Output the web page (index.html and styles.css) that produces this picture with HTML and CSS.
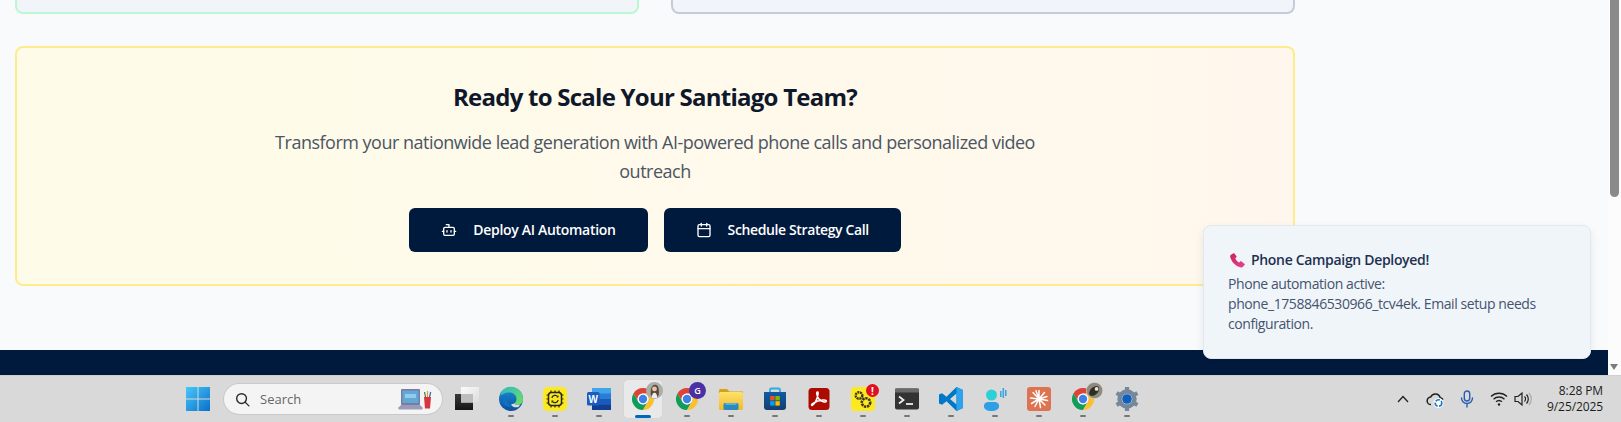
FILE: index.html
```html
<!DOCTYPE html>
<html lang="en">
<head>
<meta charset="utf-8">
<title>Ready to Scale Your Santiago Team?</title>
<link rel="stylesheet" href="styles.css">
</head>
<body>
<svg class="defs" aria-hidden="true">
  <symbol id="chrome" viewBox="0 0 24 24">
    <path fill="#db4437" d="M12 1A11 11 0 0 1 21.53 6.5H12A5.5 5.5 0 0 0 7.24 14.75L2.47 6.5A11 11 0 0 1 12 1z"/>
    <path fill="#0f9d58" d="M2.47 6.5L7.24 14.75A5.5 5.5 0 0 0 16.76 14.75L12 23A11 11 0 0 1 2.47 6.5z"/>
    <path fill="#fbc02d" d="M21.53 6.5H12A5.5 5.5 0 0 1 16.76 14.75L12 23A11 11 0 0 0 21.53 6.5z"/>
    <circle cx="12" cy="12" r="5.4" fill="#fff"/>
    <circle cx="12" cy="12" r="4.2" fill="#3f7fe8"/>
  </symbol>
  <linearGradient id="edgeA" x1="0" y1="0" x2="1" y2="1"><stop offset="0" stop-color="#2fb8c8"/><stop offset="1" stop-color="#72e05a"/></linearGradient>
  <linearGradient id="edgeB" x1="0" y1="0" x2="0" y2="1"><stop offset="0" stop-color="#1a8fd6"/><stop offset="1" stop-color="#0b4f9e"/></linearGradient>
  <linearGradient id="winG" x1="0" y1="0" x2="1" y2="1"><stop offset="0" stop-color="#47c8fb"/><stop offset="1" stop-color="#0a6fc8"/></linearGradient>
  <linearGradient id="folderG" x1="0" y1="0" x2="0" y2="1"><stop offset="0" stop-color="#fde26b"/><stop offset="1" stop-color="#f3b92a"/></linearGradient>
  <linearGradient id="storeG" x1="0" y1="0" x2="0" y2="1"><stop offset="0" stop-color="#0f5ca6"/><stop offset="1" stop-color="#163d6e"/></linearGradient>
  <linearGradient id="callG" x1="0" y1="0" x2="1" y2="1"><stop offset="0" stop-color="#c8264f"/><stop offset="1" stop-color="#ee3f9c"/></linearGradient>
  <linearGradient id="tvA" x1="0" y1="0" x2="1" y2="1"><stop offset="0" stop-color="#fbfbfb"/><stop offset="1" stop-color="#dcdcdc"/></linearGradient>
  <linearGradient id="tvB" x1="0" y1="0" x2="0" y2="1"><stop offset="0" stop-color="#3a3a3a"/><stop offset="1" stop-color="#141414"/></linearGradient>
</svg>

<div class="screen">
  <div class="viewport">
    <div class="page">
      <main class="content">
        <div class="card-row">
          <div class="stub stub-green"></div>
          <div class="stub stub-slate"></div>
        </div>
        <section class="cta">
          <h2 class="cta-title">Ready to Scale Your Santiago Team?</h2>
          <p class="cta-text">Transform your nationwide lead generation with AI-powered phone calls and personalized video outreach</p>
          <div class="cta-actions">
            <button class="btn btn-wide">
              <svg class="btn-icon" viewBox="0 0 24 24" fill="none" stroke="currentColor" stroke-width="2" stroke-linecap="round" stroke-linejoin="round"><path d="M12 8V4H8"/><rect x="4" y="8" width="16" height="12" rx="2"/><path d="M2 14h2"/><path d="M20 14h2"/><path d="M15 13v2"/><path d="M9 13v2"/></svg>
              <span>Deploy AI Automation</span>
            </button>
            <button class="btn">
              <svg class="btn-icon" viewBox="0 0 24 24" fill="none" stroke="currentColor" stroke-width="2" stroke-linecap="round" stroke-linejoin="round"><path d="M8 2v4"/><path d="M16 2v4"/><rect x="3" y="4" width="18" height="18" rx="2"/><path d="M3 10h18"/></svg>
              <span>Schedule Strategy Call</span>
            </button>
          </div>
        </section>
      </main>
      <footer class="footer"></footer>
    </div>
    <div class="scrollbar">
      <div class="thumb"></div>
      <div class="arrow-down"></div>
    </div>
  </div>

  <nav class="taskbar">
    <div class="tb-item tb-start">
      <svg class="tb-icon" viewBox="0 0 24 24"><path fill="url(#winG)" d="M0 0h11.500v11.500H0zM12.500 0H24v11.500H12.500zM0 12.500h11.500V24H0zM12.500 12.500H24V24H12.500z"/></svg>
    </div>
    <div class="search">
      <svg class="search-icon" viewBox="0 0 16 16" fill="none" stroke="#2b2b2b" stroke-width="1.500" stroke-linecap="round"><circle cx="7" cy="7" r="5.200"/><path d="M10.800 10.800l4 4"/></svg>
      <span class="search-text">Search</span>
      <svg class="search-art" viewBox="0 0 34 22" fill="none">
        <path fill="#9a9bb8" d="M0 20l3-3h19l3 3-1 1.500H1z"/>
        <rect x="3" y="1" width="19" height="16" rx="1" fill="#7a7b9e"/>
        <rect x="4.500" y="2.500" width="16" height="12.500" fill="#5fa8d8"/>
        <rect x="7" y="6" width="11" height="4" fill="#93cbea"/>
        <path fill="#d8353e" d="M26 9h7l-1 11.500h-5z"/>
        <path stroke="#3c7a3a" stroke-width="1.200" d="M27.500 9l-1-5"/>
        <path stroke="#d9a21f" stroke-width="1.200" d="M29.500 9V3"/>
        <path stroke="#3b5fb0" stroke-width="1.200" d="M31.500 9l1.200-5"/>
      </svg>
    </div>
    <div class="tb-item has-dot no-dot">
      <svg class="tb-icon" viewBox="0 0 24 24"><rect x="0" y="7" width="18" height="16" fill="url(#tvB)"/><rect x="6" y="0" width="18" height="15.500" fill="url(#tvA)"/><rect x="6" y="7" width="12" height="8.500" fill="#bdbdbd"/></svg>
    </div>
    <div class="tb-item has-dot">
      <svg class="tb-icon" viewBox="0 0 24 24">
        <circle cx="12" cy="12" r="12" fill="url(#edgeB)"/>
        <path fill="url(#edgeA)" d="M3 4A12 12 0 0 1 24 12c0 2.500-1 4.300-2.700 5.300-2 1-4.800.7-6.300-.8 1.500-.7 2.500-2.300 2.500-4.500C17.500 8 14 5.500 10.500 5.500 8 5.500 5 6 1.500 8.500 1.800 7 2.300 5.500 3 4z"/>
        <path fill="#d9d9d9" d="M15 16.500c1.500 1.500 4.300 1.800 6.300.8-.3.700-1 1.800-1.800 2.700-1.800.6-4.500.4-5.800-.5-1-.7-1.500-1.700-1.300-2.500.9 0 1.800-.1 2.600-.5z"/>
        <path fill="#1270bf" d="M7.500 11.500c0 4 3 7.500 6.500 7.500-3 1.500-7.500 1-9.500-2.500C3 13.500 4.500 9.500 8 8 7.700 9 7.500 10.300 7.500 11.500z"/>
      </svg>
    </div>
    <div class="tb-item has-dot">
      <svg class="tb-icon" viewBox="0 0 24 24" fill="none"><rect width="24" height="24" rx="5" fill="#fde91f"/><rect x="5.500" y="5.500" width="13" height="13" rx="3" stroke="#26261e" stroke-width="1.500"/><path stroke="#26261e" stroke-width="1.200" d="M8 3.500v2M12 3.500v2M16 3.500v2M8 18.500v2M12 18.500v2M16 18.500v2M3.500 8h2M3.500 12h2M3.500 16h2M18.500 8h2M18.500 12h2M18.500 16h2"/><path stroke="#26261e" stroke-width="1.200" d="M8.800 11a3.400 3.400 0 0 1 6-1.300M15.200 13a3.400 3.400 0 0 1-6 1.300"/><path fill="#26261e" d="M15.500 8.300v2.200h-2.200zM8.500 15.700v-2.200h2.200z"/></svg>
    </div>
    <div class="tb-item has-dot">
      <svg class="tb-icon" viewBox="0 0 24 24"><rect x="5" y="1" width="19" height="22" rx="1.500" fill="#2b7cd3"/><rect x="5" y="1" width="19" height="5.500" fill="#41a5ee" rx="1"/><rect x="5" y="12" width="19" height="5.500" fill="#185abd"/><rect x="5" y="17.500" width="19" height="5.500" fill="#103f91"/><rect x="0" y="5" width="12.500" height="13.500" rx="1.500" fill="#1a5cc0"/><text class="word-w" x="6.250" y="15.500">W</text></svg>
    </div>
    <div class="tb-item has-dot is-active">
      <svg class="tb-icon" viewBox="0 0 24 24"><use href="#chrome"/></svg>
      <svg class="tb-overlay" viewBox="0 0 16 16"><circle cx="8" cy="8" r="8" fill="#a9aea9"/><path fill="#5e4538" d="M4.500 12c-.5-5 .5-9 4-9.500 3-.2 4 3.500 3.500 9.500l-1.500 2h-4.500z"/><circle cx="8" cy="6.500" r="2.300" fill="#e6c3ac"/><path fill="#f0eee8" d="M5.500 15c0-3.500 1-5 2.500-5s2.500 1.500 2.500 5z"/></svg>
    </div>
    <div class="tb-item has-dot">
      <svg class="tb-icon" viewBox="0 0 24 24"><use href="#chrome"/></svg>
      <span class="badge badge-g">G</span>
    </div>
    <div class="tb-item has-dot">
      <svg class="tb-icon" viewBox="0 0 24 24"><path fill="#d8a018" d="M0 3.500A1.500 1.500 0 0 1 1.500 2h6.500l2.500 2.500H24V8H0z"/><rect x="0" y="5" width="24" height="18" rx="1.500" fill="url(#folderG)"/><rect x="4.500" y="16" width="15" height="7" rx="1.500" fill="#2a8ac0"/><rect x="6.500" y="16" width="11" height="2" fill="#57b3d6"/></svg>
    </div>
    <div class="tb-item has-dot">
      <svg class="tb-icon" viewBox="0 0 24 24" fill="none"><path stroke="#2ea8e6" stroke-width="1.800" d="M7 7V3a1.500 1.500 0 0 1 1.500-1.500h7A1.500 1.500 0 0 1 17 3v4"/><path fill="url(#storeG)" d="M1 5h22v15a3 3 0 0 1-3 3H4a3 3 0 0 1-3-3z"/><rect x="7.200" y="9" width="4.400" height="4.400" fill="#f25022"/><rect x="12.400" y="9" width="4.400" height="4.400" fill="#7fba00"/><rect x="7.200" y="14.200" width="4.400" height="4.400" fill="#00a4ef"/><rect x="12.400" y="14.200" width="4.400" height="4.400" fill="#ffb900"/></svg>
    </div>
    <div class="tb-item has-dot">
      <svg class="tb-icon" viewBox="0 0 24 24" fill="none"><rect x="1.500" y="1" width="21" height="22" rx="3.500" fill="#ad0b00"/><path stroke="#fff" stroke-width="1.500" stroke-linejoin="round" d="M5 18.500c2.500-1.500 5-6 6-11 .3-1.500.2-2.500-.5-2.500-.8 0-1 1.200-.6 2.500.8 3.500 3.200 6.500 6.500 7.300 1.800.4 3 .1 3-.7 0-.9-1.500-1.200-3.500-1-3 .3-7 1.500-9.500 3-1.500 1-2.400 2-1.400 2.400z"/></svg>
    </div>
    <div class="tb-item has-dot">
      <svg class="tb-icon" viewBox="0 0 24 24" fill="none"><rect width="24" height="24" rx="4" fill="#fde91f"/><circle cx="8" cy="8.500" r="3.300" stroke="#3a3520" stroke-width="2.400" stroke-dasharray="2 .7"/><circle cx="15" cy="15.500" r="4.200" stroke="#3a3520" stroke-width="2.600" stroke-dasharray="2.300 .8"/></svg>
      <span class="badge badge-alert">!</span>
    </div>
    <div class="tb-item has-dot">
      <svg class="tb-icon" viewBox="0 0 24 24" fill="none"><rect y="1.500" width="24" height="21" rx="2" fill="#333"/><rect y="1.500" width="24" height="4" fill="#6a6a6a"/><path stroke="#eee" stroke-width="1.800" d="M4 9.500l4.500 3.500L4 16.500"/><path stroke="#eee" stroke-width="1.800" d="M11 17h7"/></svg>
    </div>
    <div class="tb-item has-dot">
      <svg class="tb-icon" viewBox="0 0 24 24"><path fill="#0078c8" d="M17.500 0L24 3v18l-6.500 3-10-9.800-4.500 3.500L0 16.500V7.500l3-1.200 4.500 3.500zM17.500 6.500L11 12l6.500 5.500z"/><path fill="#2ca3ea" d="M17.500 0L24 3v18l-6.500 3z"/></svg>
    </div>
    <div class="tb-item has-dot">
      <svg class="tb-icon" viewBox="0 0 24 24"><circle cx="8.500" cy="8" r="5.500" fill="#2ed0d8"/><path fill="#2e9fe6" d="M1 20a4 4 0 0 1 4-5h7a4 4 0 0 1 4 5c-.5 2.500-3.500 4-7.500 4S1.500 22.500 1 20z"/><rect x="17" y="4" width="1.600" height="6" fill="#3ea4e0"/><rect x="19.500" y="1" width="1.600" height="10" fill="#3ea4e0"/><rect x="22" y="3" width="1.600" height="6" fill="#3ea4e0"/></svg>
    </div>
    <div class="tb-item has-dot">
      <svg class="tb-icon" viewBox="0 0 24 24"><rect width="24" height="24" rx="3" fill="#dd7350"/><path stroke="#fff" stroke-width="1.500" stroke-linecap="round" d="M12 12V3.500M12 12l5.500-6.500M12 12l8-2.500M12 12l8.500 1.500M12 12l6 6M12 12l1.500 8.500M12 12l-4 7.500M12 12l-7.500 4.500M12 12l-8.500-1M12 12L6 5.500M12 12L9 3.800"/></svg>
    </div>
    <div class="tb-item has-dot">
      <svg class="tb-icon" viewBox="0 0 24 24"><use href="#chrome"/></svg>
      <svg class="tb-overlay" viewBox="0 0 16 16"><circle cx="8" cy="8" r="8" fill="#d7d2c6"/><circle cx="8" cy="8" r="7.400" fill="#8f8a7f"/><path fill="#2f2b25" d="M3 10c1-4 4-6 7-6 2 0 3 2 2 4-1 3-4 5-6 5-2 .2-3.300-1-3-3z"/><circle cx="10" cy="6.500" r="1.800" fill="#e9e4d5"/></svg>
    </div>
    <div class="tb-item has-dot">
      <svg class="tb-icon" viewBox="0 0 24 24" fill="none"><circle cx="12" cy="12" r="7.500" stroke="#74879b" stroke-width="4.400"/><path stroke="#74879b" stroke-width="4.200" d="M12 0v3M12 21v3M1.600 6l2.600 1.500M19.800 16.500l2.600 1.500M1.600 18l2.600-1.500M19.800 7.500L22.400 6"/><circle cx="12" cy="12" r="4.800" fill="#0f5fbe"/></svg>
    </div>

    <div class="tray">
      <div class="tray-item tray-wide">
        <svg class="tray-chevron" viewBox="0 0 12 8" fill="none" stroke="#222" stroke-width="1.300"><path d="M1 7l5-5.500L11 7"/></svg>
      </div>
      <div class="tray-item tray-wide">
        <svg class="tray-icon" viewBox="0 0 18 18"><path fill="none" stroke="#222" stroke-width="1.500" d="M5 14.500a3.700 3.700 0 0 1-.3-7.400 5 5 0 0 1 9.500.6c1.300.2 2.300 1 2.800 2"/><circle cx="12.500" cy="13" r="5" fill="#fff"/><circle cx="12.500" cy="13" r="3.300" fill="none" stroke="#1a73c8" stroke-width="1.600" stroke-dasharray="4.500 1.500"/></svg>
      </div>
      <div class="tray-item tray-wide tray-gap">
        <svg class="tray-icon" viewBox="0 0 18 18" fill="none" stroke="#2a5db0" stroke-width="1.400" stroke-linecap="round"><rect x="6.300" y="1" width="5.400" height="10" rx="2.700"/><path d="M3.500 8a5.500 5.500 0 0 0 11 0M9 13.500V17"/></svg>
      </div>
      <div class="tray-item">
        <svg class="tray-icon" viewBox="0 0 18 18" fill="none" stroke="#222" stroke-width="1.300"><path d="M1 6.500a11.500 11.500 0 0 1 16 0M3.500 9.200a8 8 0 0 1 11 0M6 11.800a4.500 4.500 0 0 1 6 0"/><circle cx="9" cy="14.500" r="1.200" fill="#222" stroke="none"/></svg>
      </div>
      <div class="tray-item">
        <svg class="tray-icon" viewBox="0 0 18 18" fill="none" stroke="#222" stroke-width="1.200"><path d="M1 6.500h3L8 3v12l-4-3.500H1z"/><path d="M10.500 6.500a3.500 3.500 0 0 1 0 5M12.500 4.500a6.500 6.500 0 0 1 0 9"/><path stroke="#a9a9a9" d="M14.800 2.800a9 9 0 0 1 0 12.400"/></svg>
      </div>
      <div class="clock"><span>8:28 PM</span><span>9/25/2025</span></div>
    </div>
  </nav>
</div>

<aside class="toast">
  <div class="toast-title">
    <svg class="toast-icon" viewBox="0 0 16 16"><path fill="url(#callG)" d="M1 1.800L4.300 0l2.900 3.800-1.500 2c.4 1.500 2.300 3.500 4 4.200l1.900-1.400L16 11.900l-1.900 2.600c-.6.800-1.600 1.200-2.600 1C5.500 13.800 1.800 9.500.3 4.500 0 3.300.2 2.300 1 1.800z"/></svg>
    <span>Phone Campaign Deployed!</span>
  </div>
  <div class="toast-body">Phone automation active: phone_1758846530966_tcv4ek. Email setup needs configuration.</div>
</aside>
</body>
</html>
```

FILE: styles.css
```css
* { box-sizing: border-box; }
html, body { margin: 0; height: 100%; overflow: hidden; }
body {
  font-family: "Open Sans", "Noto Sans", "Liberation Sans", sans-serif;
  background: #f8fafc;
  color: #0f172a;
}
.defs { position: absolute; width: 0; height: 0; }

.screen { display: flex; flex-direction: column; height: 422px; }
.viewport { display: flex; flex: 1; min-height: 0; }
.page { flex: 1; display: flex; flex-direction: column; min-width: 0; background: #f9fafc; }
.content { flex: 1; padding-left: 15px; width: 1295px; }
.footer { height: 25px; background: #001a3d; }

.card-row { display: grid; grid-template-columns: 1fr 1fr; gap: 32px; }
.stub {
  height: 14px;
  background: #f1f5f9;
  border: 2px solid;
  border-top: 0;
  border-radius: 0 0 8px 8px;
}
.stub-green { border-color: #bbf7d0; }
.stub-slate { border-color: #c3cdd9; }

.cta {
  margin-top: 32px;
  height: 240px;
  padding: 33px 32px 0;
  border: 2px solid #fdeb8c;
  border-radius: 8px;
  background: linear-gradient(90deg, #fefce8, #fff7ed);
  text-align: center;
}
.cta-title { margin: 0 0 15px; font-size: 24px; line-height: 32px; font-weight: 700; color: #0f172a; letter-spacing: -.75px; }
.cta-text { margin: 0 auto 22px; max-width: 768px; font-size: 18px; line-height: 29px; color: #4b5563; letter-spacing: -.5px; }
.cta-actions { display: flex; justify-content: center; gap: 16px; }
.btn {
  display: flex;
  align-items: center;
  gap: 16px;
  height: 44px;
  padding: 0 32px;
  border: 0;
  border-radius: 6px;
  background: #001a3d;
  color: #fff;
  font: 600 14px/20px "Open Sans", "Noto Sans", sans-serif;
  letter-spacing: -.38px;
}
.btn-wide { letter-spacing: -.3px; }
.btn-icon { width: 16px; height: 16px; }

.scrollbar { width: 13px; background: #fcfcfd; display: flex; flex-direction: column; justify-content: space-between; align-items: flex-start; padding: 0 2px 5px; }
.thumb { width: 9px; height: 197px; background: #8a8a8a; border-radius: 0 0 5px 5px; }
.arrow-down { width: 0; height: 0; border-left: 4.500px solid transparent; border-right: 4.500px solid transparent; border-top: 6px solid #7c7c7c; }

.taskbar { height: 47px; flex: none; display: flex; align-items: flex-start; padding-left: 176px; background: #d9d9d9; border-top: 1px solid #cfcfcf; }
.tb-item { position: relative; width: 44px; height: 46px; padding-top: 11px; display: flex; flex-direction: column; align-items: center; gap: 4px; flex: none; }
.tb-icon { width: 24px; height: 24px; display: block; overflow: visible; }
.has-dot::after { content: ""; width: 6px; height: 2px; border-radius: 1px; background: #777; }
.no-dot::after { visibility: hidden; }
.is-active::before { content: ""; position: absolute; left: 3px; top: 4px; width: 38px; height: 38px; border-radius: 4px; background: rgba(255,255,255,.42); box-shadow: 0 0 1px rgba(0,0,0,.15); }
.is-active .tb-icon { position: relative; }
.is-active::after { position: relative; width: 16px; height: 3px; border-radius: 2px; background: #0067c0; }
.tb-overlay { position: absolute; left: 25px; top: 6px; width: 17px; height: 17px; }
.badge { position: absolute; border-radius: 50%; display: flex; align-items: center; justify-content: center; color: #fff; font-weight: 600; font-family: "Open Sans", sans-serif; }
.badge-g { left: 24px; top: 6px; width: 17px; height: 17px; background: #4a2fa5; font-size: 9px; }
.badge-alert { left: 25px; top: 8px; width: 13px; height: 13px; background: #e01020; font-size: 10px; font-weight: 700; }
.word-w { fill: #fff; font: 700 10px "Liberation Sans", sans-serif; text-anchor: middle; }

.search { width: 218px; height: 30px; margin: 8px 3px 0 4px; flex: none; display: flex; align-items: center; padding: 0 10px 0 11px; border-radius: 15px; background: #f4f4f4; box-shadow: 0 0 0 1px #c9c9c9; }
.search-icon { width: 15px; height: 15px; flex: none; }
.search-text { margin-left: 10px; flex: 1; font-size: 13px; color: #666; }
.search-art { width: 34px; height: 22px; flex: none; }

.tray { margin-left: auto; display: flex; align-items: flex-start; }
.tray-item { width: 24px; height: 46px; display: flex; align-items: center; justify-content: center; flex: none; }
.tray-wide { width: 32px; }
.tray-gap { margin-right: 4px; }
.tray-chevron { width: 12px; height: 8px; }
.tray-icon { width: 18px; height: 18px; }
.clock { display: flex; flex-direction: column; align-items: flex-end; width: 86px; padding: 7px 18px 0 0; font-size: 12px; line-height: 16px; color: #1c1c1c; letter-spacing: -.1px; }

.toast {
  position: absolute;
  left: 1203px;
  top: 225px;
  width: 388px;
  height: 134px;
  padding: 24px;
  border: 1px solid #e2e8f0;
  border-radius: 8px;
  background: #f0f5fa;
  box-shadow: 0 4px 10px rgba(15,23,42,.08);
  font-size: 14px;
  line-height: 20px;
}
.toast-title { display: flex; align-items: center; gap: 6px; margin: 0 0 4px 2px; font-weight: 600; color: #1e3050; letter-spacing: -.32px; }
.toast-icon { width: 15px; height: 15px; flex: none; }
.toast-body { color: #45536e; letter-spacing: -.42px; }
```
